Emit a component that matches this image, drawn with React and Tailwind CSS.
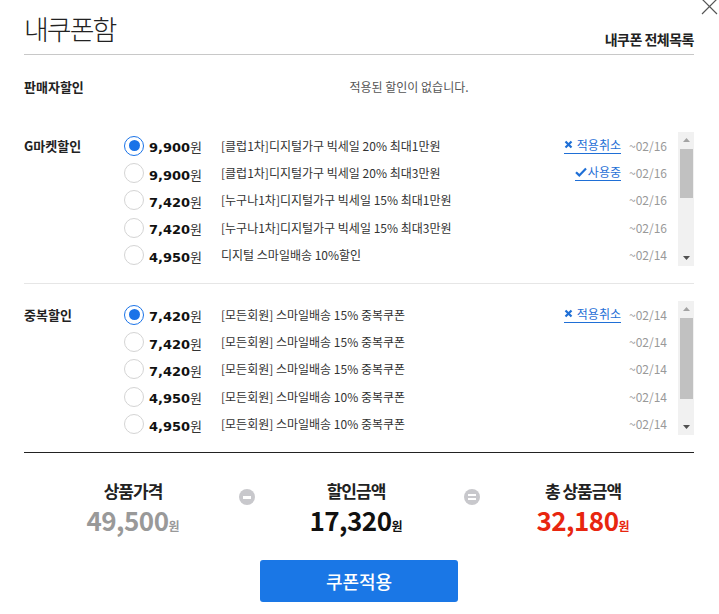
import { useState } from "react";

const gmarket = [
  { amount: "9,900", name: "[클럽1차]디지털가구 빅세일 20% 최대1만원", date: "~02/16", tag: "cancel" },
  { amount: "9,900", name: "[클럽1차]디지털가구 빅세일 20% 최대3만원", date: "~02/16", tag: "using" },
  { amount: "7,420", name: "[누구나1차]디지털가구 빅세일 15% 최대1만원", date: "~02/16" },
  { amount: "7,420", name: "[누구나1차]디지털가구 빅세일 15% 최대3만원", date: "~02/16" },
  { amount: "4,950", name: "디지털 스마일배송 10%할인", date: "~02/14" },
];

const dup = [
  { amount: "7,420", name: "[모든회원] 스마일배송 15% 중복쿠폰", date: "~02/14", tag: "cancel" },
  { amount: "7,420", name: "[모든회원] 스마일배송 15% 중복쿠폰", date: "~02/14" },
  { amount: "7,420", name: "[모든회원] 스마일배송 15% 중복쿠폰", date: "~02/14" },
  { amount: "4,950", name: "[모든회원] 스마일배송 10% 중복쿠폰", date: "~02/14" },
  { amount: "4,950", name: "[모든회원] 스마일배송 10% 중복쿠폰", date: "~02/14" },
];

function Radio({ on }) {
  return on ? (
    <span className="flex h-[20px] w-[20px] shrink-0 items-center justify-center rounded-full border border-[#1a73e8] bg-white">
      <span className="h-[11px] w-[11px] rounded-full bg-[#1a73e8]" />
    </span>
  ) : (
    <span className="h-[20px] w-[20px] shrink-0 rounded-full border border-[#d4d4d4] bg-white" />
  );
}

function Tag({ type }) {
  if (type === "cancel") {
    return (
      <span className="flex items-center gap-[4px] border-b border-[#1f6fd6] pb-[1px] text-[12px] leading-[14px] text-[#1f6fd6]">
        <svg width="9" height="9" viewBox="0 0 9 9">
          <path d="M1.5 1.5L7.5 7.5M7.5 1.5L1.5 7.5" stroke="#1f6fd6" strokeWidth="2.2" />
        </svg>
        적용취소
      </span>
    );
  }
  return (
    <span className="flex items-center gap-[1px] border-b border-[#1f6fd6] pb-[1px] text-[12px] leading-[14px] text-[#1f6fd6]">
      <svg width="12" height="10" viewBox="0 0 12 10">
        <path d="M1 5.2L4.3 8.4L11 1.5" stroke="#1f6fd6" strokeWidth="2.2" fill="none" />
      </svg>
      사용중
    </span>
  );
}

function ScrollBar({ thumbTop, thumbH }) {
  return (
    <div className="relative flex h-[134px] w-[16px] shrink-0 flex-col bg-[#f1f1f1]">
      <div className="flex h-[16px] items-center justify-center">
        <svg width="7" height="4" viewBox="0 0 7 4"><path d="M0 4L3.5 0L7 4Z" fill="#a3a3a3" /></svg>
      </div>
      <div className="relative flex-1">
        <div className="absolute left-[2px] right-[1px] bg-[#c1c1c1]" style={{ top: thumbTop, height: thumbH }} />
      </div>
      <div className="flex h-[16px] items-center justify-center">
        <svg width="7" height="4" viewBox="0 0 7 4"><path d="M0 0L3.5 4L7 0Z" fill="#505050" /></svg>
      </div>
    </div>
  );
}

function Section({ label, rows, thumbTop, thumbH, border }) {
  const [sel, setSel] = useState(0);
  return (
    <div className={"flex pt-[17px] pb-[17px] " + border}>
      <div className="w-[100px] pt-[5px] text-[13px] font-bold leading-[18px] text-[#222]">{label}</div>
      <div className="flex flex-1">
        <div className="h-[134px] flex-1 overflow-hidden">
          {rows.map((r, i) => (
            <div key={i} onClick={() => setSel(i)} className="flex h-[27.3px] items-center pr-[11px]">
              <Radio on={sel === i} />
              <span className="w-[58px] shrink-0 text-right">
                <span className="font-['DejaVu_Sans',sans-serif] text-[13px] font-bold text-[#111]">{r.amount}</span>
                <span className="text-[13px] text-[#333]">원</span>
              </span>
              <span className="ml-[19px] text-[12px] text-[#333]">{r.name}</span>
              <span className="ml-auto flex items-center gap-[8px]">
                {r.tag && <Tag type={r.tag} />}
                <span className="text-[12px] text-[#999]">{r.date}</span>
              </span>
            </div>
          ))}
        </div>
        <ScrollBar thumbTop={thumbTop} thumbH={thumbH} />
      </div>
    </div>
  );
}

function Total({ label, value, color, width }) {
  return (
    <div className={"flex flex-col items-center " + width}>
      <span className="block h-[24px] text-[17px] font-bold leading-[24px] tracking-[-1px] text-[#222]">{label}</span>
      <span className={"mt-[2px] flex h-[30px] items-baseline " + color}>
        <span className="inline-block text-[26px] font-bold leading-[30px] tracking-[-0.5px]">{value}</span>
        <span className="inline-block text-[12px] font-bold leading-[30px]">원</span>
      </span>
    </div>
  );
}

export default function App() {
  return (
    <div className="relative h-[614px] w-[719px] overflow-hidden bg-white font-['Noto_Sans_CJK_KR','Noto_Sans',sans-serif] text-[#333]">
      <button className="absolute right-[1px] top-[-2px]">
        <svg width="17" height="17" viewBox="0 0 17 17">
          <path d="M1 1L16 16M16 1L1 16" stroke="#555" strokeWidth="1.2" />
        </svg>
      </button>

      <div className="pl-[24px] pr-[25px]">
        <div className="flex h-[55px] items-end justify-between border-b border-[#c8c8c8] pb-[6px]">
          <h1 className="pb-[4px] text-[27px] font-light leading-[30px] tracking-[-2px] text-[#222]">내쿠폰함</h1>
          <a className="text-[14px] font-bold leading-[18px] tracking-[-0.5px] text-[#222]">내쿠폰 전체목록</a>
        </div>

        <div className="flex h-[64px] items-center">
          <div className="w-[100px] text-[13px] font-bold text-[#222]">판매자할인</div>
          <div className="flex-1 text-center text-[12px] text-[#555]">적용된 할인이 없습니다.</div>
        </div>

        <div className="-mt-[4px]">
          <Section label="G마켓할인" rows={gmarket} thumbTop={1} thumbH={49} border="border-b border-[#e6e6e6]" />
          <Section label="중복할인" rows={dup} thumbTop={1} thumbH={81} border="border-b border-[#222]" />
        </div>

        <div className="flex pt-[26px]">
          <Total label="상품가격" value="49,500" color="text-[#999]" width="ml-[14px] w-[190px]" />
          <div className="flex w-[38px] justify-center pt-[10px]">
            <span className="flex h-[16px] w-[16px] items-center justify-center rounded-full bg-[#c8c8cc]">
              <span className="h-[3px] w-[8px] bg-white" />
            </span>
          </div>
          <Total label="할인금액" value="17,320" color="text-[#111]" width="w-[180px]" />
          <div className="flex w-[52px] justify-center pt-[10px]">
            <span className="flex h-[16px] w-[16px] flex-col items-center justify-center gap-[2px] rounded-full bg-[#c8c8cc]">
              <span className="h-[2px] w-[8px] bg-white" />
              <span className="h-[2px] w-[8px] bg-white" />
            </span>
          </div>
          <Total label="총 상품금액" value="32,180" color="text-[#e8260f]" width="w-[170px]" />
        </div>

        <button className="mx-auto mt-[25px] flex h-[42px] w-[198px] items-center justify-center rounded-[3px] bg-[#1a77e6] text-[18px] font-medium text-white">
          쿠폰적용
        </button>
      </div>
    </div>
  );
}
